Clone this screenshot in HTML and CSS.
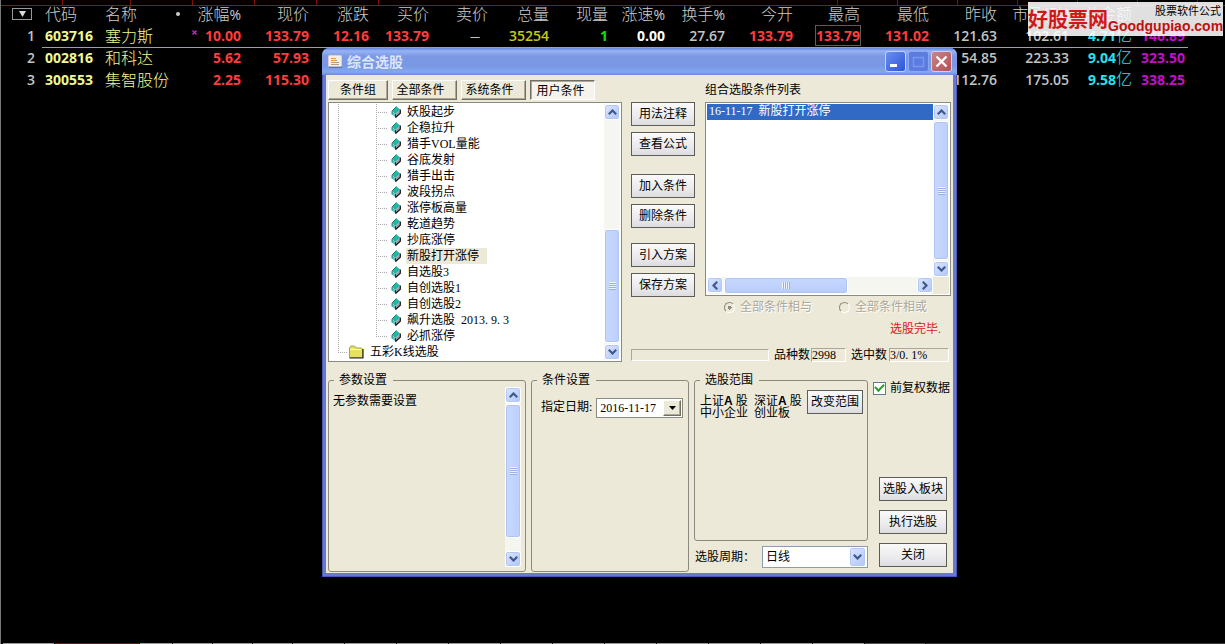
FILE: index.html
```
<!DOCTYPE html>
<html lang="zh-CN">
<head>
<meta charset="utf-8">
<title>综合选股</title>
<link rel="stylesheet" href="styles.css">
</head>
<body>
<svg width="0" height="0" class="defs" aria-hidden="true">
  <symbol id="up" viewBox="0 0 9 6"><path d="M0.8 5.2 4.5 1.5 8.2 5.2" fill="none" stroke="#40598c" stroke-width="2.2"/></symbol>
  <symbol id="down" viewBox="0 0 9 6"><path d="M0.8 0.8 4.5 4.5 8.2 0.8" fill="none" stroke="#40598c" stroke-width="2.2"/></symbol>
  <symbol id="left" viewBox="0 0 6 9"><path d="M5.2 0.8 1.5 4.5 5.2 8.2" fill="none" stroke="#40598c" stroke-width="2.2"/></symbol>
  <symbol id="right" viewBox="0 0 6 9"><path d="M0.8 0.8 4.5 4.5 0.8 8.2" fill="none" stroke="#40598c" stroke-width="2.2"/></symbol>
  <symbol id="book" viewBox="0 0 10 12">
    <path d="M5.500 0.500 9 3.500 4.500 8.200 1 5z" fill="#20b8a8"/>
    <path d="M1 5 4.500 8.200 4.500 11.500 1 8.500z" fill="#60c0bc"/>
    <path d="M4.500 8.200 9 3.500 9 7 4.500 11.500z" fill="#a8a0b0"/>
    <path d="M5.500 0.500 1 5 1 8.500" fill="none" stroke="#287878" stroke-width="1"/>
    <path d="M4.500 11.500 9.300 7.200 9.300 3.500" fill="none" stroke="#101010" stroke-width="1.200"/>
    <path d="M4.500 8.200V11.500" stroke="#103c3c" stroke-width="1"/>
  </symbol>
</svg>

<div class="desktop">
  <div class="ticks"><i></i><i class="wide"></i><i></i><i></i><i></i><i></i><i class="span"></i><i></i><i></i><i></i><i></i><i></i><i></i></div>
  <table class="quotes">
    <colgroup><col class="w42"><col class="w60"><col class="w86"><col class="w54"><col class="w68"><col class="w60"><col class="w60"><col class="w59"><col class="w61"><col class="w59"><col class="w57"><col class="w60"><col class="w68"><col class="w67"><col class="w69"><col class="w68"><col class="w72"><col class="w63"><col class="w55"></colgroup>
    <thead>
      <tr>
        <th><button class="filter" type="button" aria-label="菜单"><svg viewBox="0 0 7 6" width="7" height="6"><path d="M0 0H7L3.5 6z" fill="#d8d8d8"/></svg></button></th>
        <th class="l">代码</th><th class="l"><span class="name-head">名称<span class="dot"></span></span></th><th>涨幅<b>%</b></th><th>现价</th><th>涨跌</th><th>买价</th><th>卖价</th><th>总量</th><th>现量</th><th>涨速<b>%</b></th><th>换手<b>%</b></th><th>今开</th><th>最高</th><th>最低</th><th>昨收</th><th>市盈(动)</th><th>总金额</th><th></th>
      </tr>
    </thead>
    <tbody>
      <tr class="current">
        <td>1</td><td class="l name">603716</td><td class="l name cn">塞力斯</td><td class="red"><svg class="mark" viewBox="0 0 5 5" width="5" height="5"><path d="M0.5 0.5 4.5 4.5M4.5 0.5 0.5 4.5" stroke="#d020d0" stroke-width="1.4"/></svg>10.00</td><td class="red">133.79</td><td class="red">12.16</td><td class="red">133.79</td><td class="dash">—</td><td class="yellow">35254</td><td class="green">1</td><td class="white">0.00</td><td>27.67</td><td class="red">133.79</td><td class="red"><span class="boxed">133.79</span></td><td class="red">131.02</td><td>121.63</td><td>102.61</td><td class="cyan">4.71<span>亿</span></td><td class="purple">146.89</td>
      </tr>
      <tr>
        <td>2</td><td class="l name">002816</td><td class="l name cn">和科达</td><td class="red">5.62</td><td class="red">57.93</td><td colspan="10"></td><td>54.85</td><td>223.33</td><td class="cyan">9.04<span>亿</span></td><td class="purple">323.50</td>
      </tr>
      <tr>
        <td>3</td><td class="l name">300553</td><td class="l name cn">集智股份</td><td class="red">2.25</td><td class="red">115.30</td><td colspan="10"></td><td>112.76</td><td>175.05</td><td class="cyan">9.58<span>亿</span></td><td class="purple">338.25</td>
      </tr>
    </tbody>
  </table>
  <div class="strip"><i class="s51"></i><i class="s84 hot"></i><i class="s32"></i><i></i><i></i><i></i><i class="s51"></i><i class="s51"></i><i class="s51"></i><i class="s51"></i><i class="s51"></i><i class="s51"></i><i class="s51"></i><i class="s51"></i><i class="s51"></i><i class="s51"></i><i class="s51"></i><i class="s60"></i><i class="rest"></i></div>
</div>

<aside class="watermark">
  <span class="wm-cn">好股票网</span>
  <span class="wm-col"><span class="wm-sub">股票软件公式</span><span class="wm-url">Goodgupiao.com</span></span>
</aside>

<section class="dialog" role="dialog" aria-labelledby="dlg-title">
  <header class="titlebar">
    <svg width="14" height="13" viewBox="0 0 14 13"><rect x=".5" y=".5" width="13" height="11" rx="1" fill="#f4efe4" stroke="#d8d4d0"/><path d="M3 3.5H8M3 5.5H9" stroke="#e09a50" stroke-width="1.2"/><path d="M3 7.5H11M3 9.5H11" stroke="#b0a090" stroke-width="1.2"/><path d="M1 12.3H14" stroke="#5a6a9c"/></svg>
    <h1 id="dlg-title">综合选股</h1>
    <button class="cap min" type="button" aria-label="最小化"><svg width="19" height="19" viewBox="0 0 19 19"><path d="M4 13.5H11" stroke="#fff" stroke-width="3"/></svg></button>
    <button class="cap max" type="button" aria-label="最大化" disabled><svg width="19" height="19" viewBox="0 0 19 19"><path d="M4.5 5V14.5H14.5V5M4 5.5H15" fill="none" stroke="#7a98ea" stroke-width="1.4"/></svg></button>
    <button class="cap close" type="button" aria-label="关闭"><svg width="19" height="19" viewBox="0 0 19 19"><path d="M4.5 4.5 14.5 14.5M14.5 4.5 4.5 14.5" stroke="#fff" stroke-width="2.4"/></svg></button>
  </header>

  <div class="client">
    <div class="upper">
      <div class="left">
        <div class="tabs" role="tablist">
          <button type="button" role="tab" class="tab first">条件组</button><button type="button" role="tab" class="tab">全部条件</button><button type="button" role="tab" class="tab">系统条件</button><button type="button" role="tab" class="tab on" aria-selected="true">用户条件</button>
        </div>
        <div class="tree">
          <ul class="nodes">
            <li class="leaf"><svg class="book"><use href="#book"/></svg><span>妖股起步</span></li>
            <li class="leaf"><svg class="book"><use href="#book"/></svg><span>企稳拉升</span></li>
            <li class="leaf"><svg class="book"><use href="#book"/></svg><span>猎手VOL量能</span></li>
            <li class="leaf"><svg class="book"><use href="#book"/></svg><span>谷底发射</span></li>
            <li class="leaf"><svg class="book"><use href="#book"/></svg><span>猎手出击</span></li>
            <li class="leaf"><svg class="book"><use href="#book"/></svg><span>波段拐点</span></li>
            <li class="leaf"><svg class="book"><use href="#book"/></svg><span>涨停板高量</span></li>
            <li class="leaf"><svg class="book"><use href="#book"/></svg><span>乾道趋势</span></li>
            <li class="leaf"><svg class="book"><use href="#book"/></svg><span>抄底涨停</span></li>
            <li class="leaf sel"><svg class="book"><use href="#book"/></svg><span>新股打开涨停</span></li>
            <li class="leaf"><svg class="book"><use href="#book"/></svg><span>自选股3</span></li>
            <li class="leaf"><svg class="book"><use href="#book"/></svg><span>自创选股1</span></li>
            <li class="leaf"><svg class="book"><use href="#book"/></svg><span>自创选股2</span></li>
            <li class="leaf"><svg class="book"><use href="#book"/></svg><span>飙升选股&nbsp; 2013. 9. 3</span></li>
            <li class="leaf last"><svg class="book"><use href="#book"/></svg><span>必抓涨停</span></li>
            <li class="group"><svg width="16" height="14" viewBox="0 0 16 14"><path d="M1.5 3 3 1H6.500L8 3H13.500L14.500 4V12.500H1.500z" fill="#e8e060" stroke="#a8a058"/><path d="M2.500 4.500H13" stroke="#fffcc0"/><path d="M1.500 13H15V4" fill="none" stroke="#222" stroke-width="1.200"/></svg><span>五彩K线选股</span></li>
          </ul>
          <div class="vbar">
            <button type="button" class="arrow" aria-label="向上"><svg width="9" height="6"><use href="#up"/></svg></button>
            <div class="gap-tree"></div>
            <div class="thumb"><i class="grip"></i></div>
            <button type="button" class="arrow" aria-label="向下"><svg width="9" height="6"><use href="#down"/></svg></button>
          </div>
        </div>
      </div>

      <div class="right">
        <div class="pick">
          <div class="actions">
            <button type="button" class="btn">用法注释</button>
            <button type="button" class="btn">查看公式</button>
            <button type="button" class="btn split">加入条件</button>
            <button type="button" class="btn">删除条件</button>
            <button type="button" class="btn split">引入方案</button>
            <button type="button" class="btn">保存方案</button>
          </div>
          <div class="chosen">
            <div class="caption" id="list-label">组合选股条件列表</div>
            <div class="listbox">
              <ul class="items" role="listbox" aria-labelledby="list-label"><li role="option" aria-selected="true">16-11-17&nbsp; 新股打开涨停</li></ul>
              <div class="vbar">
                <button type="button" class="arrow" aria-label="向上"><svg width="9" height="6"><use href="#up"/></svg></button>
                <div class="thumb"><i class="grip"></i></div>
                <button type="button" class="arrow" aria-label="向下"><svg width="9" height="6"><use href="#down"/></svg></button>
              </div>
              <div class="hbar">
                <button type="button" class="arrow" aria-label="向左"><svg width="6" height="9"><use href="#left"/></svg></button>
                <div class="thumb"><i class="grip side"></i></div>
                <div class="gap-list"></div>
                <button type="button" class="arrow" aria-label="向右"><svg width="6" height="9"><use href="#right"/></svg></button>
              </div>
              <div class="corner"></div>
            </div>
            <div class="radios">
              <label><input type="radio" name="logic" checked disabled>全部条件相与</label>
              <label><input type="radio" name="logic" disabled>全部条件相或</label>
            </div>
            <p class="done">选股完毕.</p>
          </div>
        </div>
        <div class="status">
          <div class="progress"></div>
          <label for="total">品种数</label><output id="total" class="total">2998</output>
          <label for="hits">选中数</label><output id="hits" class="hits">3/0. 1%</output>
        </div>
      </div>
    </div>

    <div class="lower">
      <fieldset class="params">
        <legend>参数设置</legend>
        <p>无参数需要设置</p>
        <div class="vbar">
          <button type="button" class="arrow" aria-label="向上"><svg width="9" height="6"><use href="#up"/></svg></button>
          <div class="thumb"><i class="grip"></i></div>
          <div class="gap-params"></div>
          <button type="button" class="arrow" aria-label="向下"><svg width="9" height="6"><use href="#down"/></svg></button>
        </div>
      </fieldset>
      <fieldset class="settings">
        <legend>条件设置</legend>
        <label for="day">指定日期:</label>
        <div class="date"><input id="day" type="text" value="2016-11-17"><button type="button" aria-label="选择日期"><svg width="7" height="4" viewBox="0 0 7 4"><path d="M0 0H7L3.5 4z"/></svg></button></div>
      </fieldset>
      <div class="scope-col">
        <fieldset class="scope">
          <legend>选股范围</legend>
          <p><span>上证<b>A</b> 股</span><span>深证<b>A</b> 股</span><span>中小企业</span><span>创业板</span></p>
          <button type="button" class="btn">改变范围</button>
        </fieldset>
        <div class="period">
          <label for="period">选股周期：</label>
          <div class="combo"><select id="period"><option>日线</option></select><span class="arrow drop"><svg width="9" height="6"><use href="#down"/></svg></span></div>
        </div>
      </div>
      <div class="final">
        <label class="check"><input type="checkbox" checked>前复权数据</label>
        <div class="final-btns">
          <button type="button" class="btn">选股入板块</button>
          <button type="button" class="btn">执行选股</button>
          <button type="button" class="btn">关闭</button>
        </div>
      </div>
    </div>
  </div>
</section>
</body>
</html>
```
FILE: styles.css
```
* { box-sizing: border-box; }
body, h1, p, ul, fieldset, legend { margin: 0; padding: 0; }
ul { list-style: none; }
i { font-style: normal; }
body {
  background: #000;
  color: #c4c4c4;
  font-family: "Liberation Serif", "Noto Sans CJK SC", sans-serif;
  font-size: 12px;
  line-height: 16px;
  overflow: hidden;
}
button, input, select { font: inherit; color: #000; margin: 0; padding: 0; }
svg { display: block; flex: none; }
.defs { position: absolute; }

/* Quote board */
.desktop { min-height: 100vh; display: flex; flex-direction: column; border-left: 1px solid #777; }
.ticks { display: flex; height: 6px; border-bottom: 1px solid #8c1414; overflow: hidden; }
.ticks i { flex: none; width: 62px; border-right: 1px solid #7c1010; }
.ticks .wide { width: 68px; }
.ticks .span { width: 459px; }
.ticks .span ~ i { width: 60px; }
.quotes {
  table-layout: fixed;
  width: 97%;
  border-collapse: collapse;
  margin-left: -1px;
  font-family: "Open Sans", "Noto Sans CJK SC", sans-serif;
  font-size: 14px;
  font-weight: 600;
}
.w42 { width: 42px; } .w54 { width: 54px; } .w55 { width: 55px; } .w57 { width: 57px; }
.w59 { width: 59px; } .w60 { width: 60px; } .w61 { width: 61px; } .w63 { width: 63px; }
.w67 { width: 67px; } .w68 { width: 68px; } .w69 { width: 69px; } .w72 { width: 72px; } .w86 { width: 86px; }
.quotes th, .quotes td { padding: 0 1px 0 0; height: 22px; line-height: 20px; text-align: right; white-space: nowrap; }
.quotes th { height: 19px; line-height: 16px; padding-bottom: 3px; font-size: 16px; font-weight: 300; color: #ccc; }
.quotes th b { font-size: 14px; line-height: 1px; }
.quotes th:first-child, .quotes td:first-child { padding-right: 7px; }
.quotes th:last-child, .quotes td:last-child { padding-right: 3px; }
.quotes .l { text-align: left; padding-left: 3px; }
.quotes .current td:not(:first-child) { border-bottom: 1px solid #a4b040; }
.quotes .name { color: #f0f890; font-weight: 700; }
.quotes .cn { font-size: 16px; font-weight: 300; }
.quotes .red { color: #ff3c3c; font-weight: 700; }
.quotes .yellow { color: #c8c818; }
.quotes .green { color: #10e010; font-weight: 700; }
.quotes .white { color: #fff; font-weight: 700; }
.quotes .cyan { color: #28e0f0; font-weight: 700; }
.quotes .cyan span { font-size: 16px; font-weight: 300; line-height: 1px; }
.quotes .purple { color: #c010c8; font-weight: 700; }
.quotes .dash { padding-right: 9px; font-size: 10px; }
.filter { display: flex; align-items: center; justify-content: center; width: 20px; height: 12px; margin-left: auto; background: none; border: 1px solid #999; }
.quotes th:first-child { padding-right: 10px; }
.name-head { display: flex; align-items: center; justify-content: space-between; padding-right: 7px; }
.dot { width: 4px; height: 4px; border-radius: 2px; background: #ccc; }
.mark { display: inline-block; margin-right: 8px; vertical-align: 6px; }
.boxed { outline: 1px solid #5c5c5c; }
.strip { display: flex; gap: 1px; height: 1px; margin-top: auto; padding-left: 2px; overflow: hidden; }
.strip i { flex: none; width: 39px; background: #999; }
.strip .s32 { width: 32px; } .strip .s51 { width: 51px; } .strip .s60 { width: 60px; background: #555; }
.strip .s84 { width: 84px; } .strip .hot { background: #8c0c0c; }
.strip .rest { flex: 1; background: #3a3a3a; }

.watermark { position: absolute; top: 2px; right: 2px; display: flex; align-items: center; width: 195px; height: 34px; background: rgba(255, 255, 255, .88); white-space: nowrap; }
.wm-cn { font: 700 20px/30px "Noto Sans CJK SC", sans-serif; color: #d01818; }
.wm-col { display: flex; flex-direction: column; }
.wm-sub { padding-right: 2px; font: 11px/14px "Noto Sans CJK SC", sans-serif; color: #000; text-align: right; }
.wm-url { font: 700 14px/18px "Liberation Sans", sans-serif; color: #c01010; }

/* Dialog window */
.dialog { position: absolute; left: 322px; top: 48px; width: 635px; padding: 0 4px 4px; border-radius: 7px 7px 0 0; background: #6878d0; box-shadow: inset 0 0 0 1px #4858b8; color: #000; }
.titlebar { display: flex; align-items: center; gap: 2px; height: 27px; margin: 0 -4px; padding: 0 5px 0 6px; border-radius: 7px 7px 0 0; background: linear-gradient(#6484e0, #98b4f4 3px, #7c98e4 8px, #7898e4 18px, #84a8f0 24px, #6c88d8); }
.titlebar h1 { flex: 1; margin-left: 3px; padding-bottom: 2px; font: 700 14px/20px "Noto Sans CJK SC", sans-serif; color: #dce6fa; }
.cap { width: 21px; height: 21px; border: 1px solid #c4d2fa; border-radius: 3px; background: linear-gradient(135deg, #6c90f0, #2c54d8); }
.cap.max { background: #5c7ce0; border-color: #8ca8f0; }
.cap.close { background: linear-gradient(135deg, #cc8488, #b05058); }
.client { padding: 5px 2px 1px; background: #ece9d8; }
.upper { display: flex; gap: 9px; }
.left { width: 294px; flex: none; }
.tabs { display: flex; gap: 4px; height: 22px; align-items: flex-start; }
.tab { width: 65px; height: 20px; line-height: 16px; padding: 0 8px 0 0; border: 1px solid; border-color: #fff #716f64 #716f64 #fff; box-shadow: inset -1px -1px #aca899; background: #ece9d8; }
.tab.first { width: 60px; padding: 0; }
.tab.on { padding: 2px 4px 0 0; border-color: #716f64 #fff #fff #716f64; box-shadow: inset 1px 1px #aca899; background: #f5f3ec; }
.tree { display: flex; height: 260px; padding: 1px; border: 1px solid #8a8a80; background: #fff; }
.nodes { flex: 1; }
.nodes li { display: flex; align-items: center; height: 16px; white-space: nowrap; }
.nodes span { padding: 0 8px 0 1px; }
.leaf {
  padding-left: 61px; gap: 5px;
  background:
    repeating-linear-gradient(#aaa 0 1px, transparent 1px 2px) 8px 0 / 1px 16px no-repeat,
    repeating-linear-gradient(#aaa 0 1px, transparent 1px 2px) 46px 0 / 1px 16px no-repeat,
    repeating-linear-gradient(90deg, #aaa 0 1px, transparent 1px 2px) 46px 8px / 11px 1px no-repeat;
}
.leaf.last { background-size: 1px 16px, 1px 8px, 11px 1px; }
.leaf.sel span { background: #ece9d8; }
.book { width: 10px; height: 12px; }
.group {
  padding-left: 18px; gap: 5px;
  background:
    repeating-linear-gradient(#aaa 0 1px, transparent 1px 2px) 8px 0 / 1px 8px no-repeat,
    repeating-linear-gradient(90deg, #aaa 0 1px, transparent 1px 2px) 8px 8px / 10px 1px no-repeat;
}

/* Scroll bars */
.vbar { display: flex; flex-direction: column; width: 16px; flex: none; background: #f6f6f0; }
.hbar { display: flex; background: #f6f6f0; }
.arrow { display: flex; align-items: center; justify-content: center; width: 16px; height: 16px; flex: none; border: 1px solid #fff; border-radius: 3px; background: linear-gradient(135deg, #dce6fe, #b0c6f8); box-shadow: inset 0 0 0 1px #b4c8f6; }
.thumb { display: flex; align-items: center; justify-content: center; flex: 1; margin: 1px 0; border: 1px solid #fff; border-radius: 3px; background: linear-gradient(90deg, #c8d8ff, #bccffc); box-shadow: inset 0 0 0 1px #b0c4f4; }
.hbar .thumb { margin: 0 1px; background: linear-gradient(#c8d8ff, #b8ccfc); }
.grip { width: 7px; height: 8px; background: repeating-linear-gradient(#eef4ff 0 1px, #96b0ec 1px 2px); }
.grip.side { width: 8px; height: 7px; background: repeating-linear-gradient(90deg, #eef4ff 0 1px, #96b0ec 1px 2px); }
.gap-tree { height: 108px; }
.gap-list { width: 68px; }
.gap-params { height: 12px; }

/* Upper right */
.right { flex: 1; display: flex; flex-direction: column; justify-content: space-between; }
.pick { display: flex; gap: 10px; }
.actions { display: flex; flex-direction: column; gap: 6px; width: 64px; padding-top: 22px; flex: none; }
.btn { height: 24px; padding-bottom: 1px; border: 1px solid #5c5c58; background: linear-gradient(#fafafa, #e8e8ea 70%, #dcdce0); white-space: nowrap; }
.btn.split { margin-top: 12px; }
.actions .btn.split ~ .btn.split { margin-top: 9px; }
.chosen { flex: 1; }
.caption { height: 22px; line-height: 20px; }
.listbox { display: grid; grid-template: 1fr 17px / 1fr 16px; height: 194px; padding: 1px; border: 1px solid #8a8a80; background: #fff; }
.items li { height: 16px; line-height: 14px; padding-left: 2px; background: #316ac5; color: #fff; }
.corner { background: #ece9d8; }
.radios { display: flex; gap: 27px; height: 22px; padding-left: 19px; align-items: center; color: #aca899; text-shadow: 1px 1px #fff; }
.radios label { display: flex; align-items: center; gap: 5px; white-space: nowrap; }
.radios input { appearance: none; width: 11px; height: 11px; border-radius: 6px; border: 1px solid; border-color: #8c8878 #fff #fff #8c8878; }
.radios input:checked { background: radial-gradient(#908c80 0 2px, transparent 2px); }
.done { padding-right: 10px; margin-top: 3px; text-align: right; color: #d81818; }
.status { display: flex; align-items: center; height: 15px; white-space: nowrap; }
.progress { width: 138px; height: 12px; margin-right: 5px; border: 1px solid; border-color: #aca899 #fff #fff #aca899; }
.status output { height: 14px; line-height: 13px; border: 1px solid; border-color: #aca899 #fff #fff #aca899; }
.total { width: 35px; margin: 0 5px 0 1px; }
.hits { width: 60px; margin-left: 2px; }

/* Lower groups */
.lower { display: flex; gap: 5px; margin-top: 11px; height: 199px; }
fieldset { min-width: 0; border: 1px solid #8c8a80; border-radius: 3px; }
legend { height: 14px; line-height: 14px; margin-left: 5px; padding: 0 6px 0 5px; }
.params { width: 198px; display: flex; justify-content: space-between; padding: 0 4px 4px 0; }
.params p { padding: 6px 0 0 4px; }
.settings { width: 158px; display: flex; align-items: flex-start; gap: 4px; padding: 11px 5px 0 0; }
.settings label { line-height: 18px; padding-left: 9px; white-space: nowrap; }
.date { display: flex; flex: 1; height: 20px; border: 1px solid #8a8a80; padding: 1px; background: #fff; }
.date input { flex: 1; width: 0; border: 0; padding-left: 2px; background: #fff; }
.date button { display: flex; align-items: center; justify-content: center; width: 18px; background: #ece9d8; border: 1px solid; border-color: #fff #716f64 #716f64 #fff; box-shadow: inset -1px -1px #aca899; }
.scope-col { width: 174px; display: flex; flex-direction: column; gap: 5px; }
.scope { flex: 1; display: flex; align-items: flex-start; justify-content: space-between; padding: 3px 4px 0 0; }
.scope p { display: grid; grid-template-columns: 48px 48px; column-gap: 6px; line-height: 12px; padding: 5px 0 0 5px; white-space: nowrap; }
.scope b { font-family: "Liberation Sans", sans-serif; }
.scope .btn { width: 56px; flex: none; }
.period { display: flex; align-items: center; gap: 7px; height: 26px; padding: 0 0 4px 1px; }
.period label { white-space: nowrap; }
.combo { flex: 1; display: grid; grid-template-columns: 1fr 18px; height: 22px; border: 1px solid #8c9cb0; background: #fff; }
.combo select { grid-area: 1 / 1 / 2 / 3; appearance: none; border: 0; padding-left: 3px; background: none; }
.drop { grid-area: 1 / 2 / 2 / 3; width: 17px; height: 20px; pointer-events: none; }
.final { flex: 1; display: flex; flex-direction: column; justify-content: space-between; }
.check { display: flex; align-items: center; gap: 4px; margin-top: 7px; white-space: nowrap; }
.check input { appearance: none; display: grid; place-items: center; flex: none; width: 13px; height: 13px; border: 1px solid #5c7c94; background: #fff; }
.check input:checked::after { content: ""; width: 7px; height: 4px; border: solid #28a028; border-width: 0 0 2px 2px; transform: rotate(-45deg) translate(1px, -1px); }
.final-btns { display: flex; flex-direction: column; gap: 9px; padding: 0 4px 5px 6px; }
```
